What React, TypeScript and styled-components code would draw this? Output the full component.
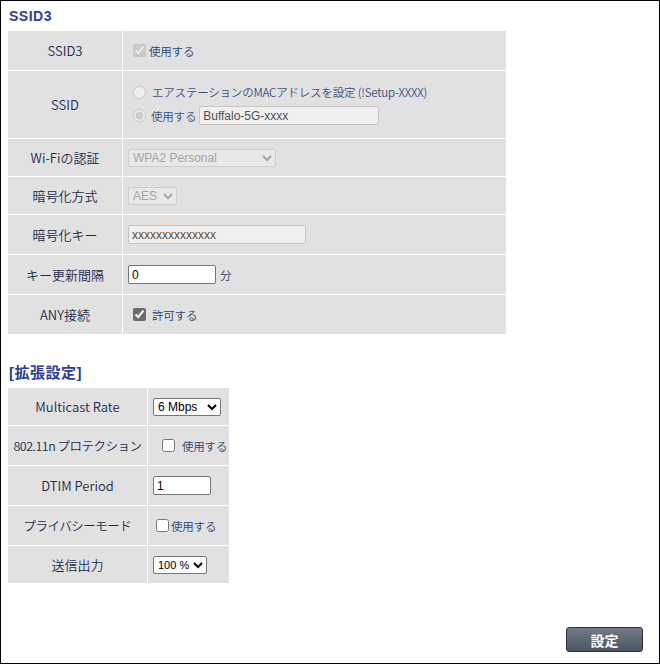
import React from "react";
import styled, { createGlobalStyle } from "styled-components";

const GlobalStyle = createGlobalStyle`
  html, body {
    margin: 0;
    padding: 0;
    background: #fff;
  }
  body {
    font-family: "Noto Sans CJK JP", "Liberation Sans", sans-serif;
    font-size: 13px;
    color: #1d2b4c;
  }
`;

const Frame = styled.div`
  box-sizing: border-box;
  width: 660px;
  height: 664px;
  border: 1px solid #000;
  padding: 6px 7px 0 7px;
  display: flex;
  flex-direction: column;
`;

const SectionTitle = styled.h2<{ $top?: number; $size?: number }>`
  margin: ${(p) => p.$top ?? 0}px 0 0 1px;
  height: 18px;
  line-height: 18px;
  font-family: "Liberation Sans", "Noto Sans CJK JP", sans-serif;
  font-size: ${(p) => p.$size ?? 14}px;
  font-weight: 700;
  color: #2d3d98;
  letter-spacing: 0.5px;
`;

const Grid = styled.div<{ $label: number; $width: number }>`
  display: grid;
  grid-template-columns: ${(p) => p.$label}px minmax(0, 1fr);
  gap: 1px;
  width: ${(p) => p.$width}px;
  margin-top: 6px;
`;

const Label = styled.div<{ $h: number; $tight?: boolean }>`
  height: ${(p) => p.$h}px;
  background: #e1e1e1;
  display: flex;
  align-items: center;
  justify-content: center;
  overflow: hidden;
  font-family: "Noto Sans CJK JP", "Liberation Sans", sans-serif;
  font-size: ${(p) => (p.$tight ? 12.5 : 13)}px;
  font-weight: 350;
  letter-spacing: ${(p) => (p.$tight ? -0.5 : 0)}px;
  color: #1d2b4c;
  white-space: nowrap;
`;

const Value = styled.div<{ $h: number }>`
  height: ${(p) => p.$h}px;
  background: #e1e1e1;
  display: flex;
  flex-direction: column;
  justify-content: center;
  gap: 6px;
  padding-left: 5px;
  font-family: "Noto Sans CJK JP", "Liberation Sans", sans-serif;
  font-size: 11.5px;
  font-weight: 350;
  color: #2c4372;
  overflow: hidden;
`;

const Line = styled.div<{ $gap?: number }>`
  display: flex;
  align-items: center;
  gap: ${(p) => p.$gap ?? 4}px;
  white-space: nowrap;
`;

const Check = styled.input.attrs({ type: "checkbox" })<{ $left?: number }>`
  width: 13px;
  height: 13px;
  margin: 0 0 0 ${(p) => p.$left ?? 5}px;
  accent-color: #6c6c6c;
`;

const Radio = styled.input.attrs({ type: "radio" })`
  width: 13px;
  height: 13px;
  margin: 0 2px 0 5px;
`;

const OptText = styled.span<{ $dim?: boolean }>`
  color: ${(p) => (p.$dim ? "#3b5080" : "#2c4372")};
  letter-spacing: -0.2px;
`;

const TextBox = styled.input<{ $w: number; $disabled?: boolean }>`
  box-sizing: border-box;
  width: ${(p) => p.$w}px;
  height: 19px;
  padding: 0 3px;
  font-family: "Liberation Sans", sans-serif;
  font-size: 12px;
  color: ${(p) => (p.$disabled ? "#505050" : "#000")};
  background: ${(p) => (p.$disabled ? "#efefef" : "#fff")};
  border: 1px solid ${(p) => (p.$disabled ? "#c6c6c6" : "#767676")};
  border-radius: 2px;
  outline: none;
`;

const Select = styled.select<{ $w: number; $small?: boolean }>`
  box-sizing: border-box;
  width: ${(p) => p.$w}px;
  height: 18px;
  padding: 0;
  font-family: "Liberation Sans", sans-serif;
  font-size: ${(p) => (p.$small ? 11 : 12)}px;
  color: #000;
  background: #fff;
  border: 1px solid #767676;
  border-radius: 2px;
  &:disabled {
    color: #8a8a8a;
    background: #ebebeb;
    border-color: #c6c6c6;
  }
`;

const Footer = styled.div`
  margin-top: auto;
  display: flex;
  justify-content: flex-end;
  padding: 0 9px 11px 0;
`;

const SubmitButton = styled.button`
  width: 77px;
  height: 25px;
  border: 1px solid #2e3136;
  border-radius: 3px;
  background: linear-gradient(#737b88, #4d5562);
  color: #fff;
  font-family: "Noto Sans CJK JP", sans-serif;
  font-weight: 700;
  font-size: 14px;
  line-height: 1;
  cursor: pointer;
`;

export default function App() {
  return (
    <>
      <GlobalStyle />
      <Frame>
        <SectionTitle>SSID3</SectionTitle>
        <Grid $label={114} $width={498}>
          <Label $h={39}>SSID3</Label>
          <Value $h={39}>
            <Line $gap={3}>
              <Check checked disabled readOnly />
              <OptText>使用する</OptText>
            </Line>
          </Value>

          <Label $h={67}>SSID</Label>
          <Value $h={67}>
            <Line>
              <Radio name="ssid" disabled />
              <OptText $dim>エアステーションのMACアドレスを設定 (!Setup-XXXX)</OptText>
            </Line>
            <Line $gap={3}>
              <Radio name="ssid" disabled checked readOnly />
              <OptText $dim>使用する</OptText>
              <TextBox $w={180} $disabled disabled defaultValue="Buffalo-5G-xxxx" />
            </Line>
          </Value>

          <Label $h={37}>Wi-Fiの認証</Label>
          <Value $h={37}>
            <Line>
              <Select $w={148} disabled defaultValue="wpa2">
                <option value="wpa2">WPA2 Personal</option>
              </Select>
            </Line>
          </Value>

          <Label $h={37}>暗号化方式</Label>
          <Value $h={37}>
            <Line>
              <Select $w={49} disabled defaultValue="aes">
                <option value="aes">AES</option>
              </Select>
            </Line>
          </Value>

          <Label $h={39}>暗号化キー</Label>
          <Value $h={39}>
            <Line>
              <TextBox $w={178} $disabled disabled defaultValue="xxxxxxxxxxxxxx" />
            </Line>
          </Value>

          <Label $h={39}>キー更新間隔</Label>
          <Value $h={39}>
            <Line>
              <TextBox $w={88} defaultValue="0" />
              <OptText>分</OptText>
            </Line>
          </Value>

          <Label $h={39}>ANY接続</Label>
          <Value $h={39}>
            <Line $gap={6}>
              <Check defaultChecked />
              <OptText>許可する</OptText>
            </Line>
          </Value>
        </Grid>

        <SectionTitle $top={30} $size={15}>[拡張設定]</SectionTitle>
        <Grid $label={139} $width={221}>
          <Label $h={37}>Multicast Rate</Label>
          <Value $h={37}>
            <Line>
              <Select $w={68} defaultValue="6">
                <option value="6">6 Mbps</option>
              </Select>
            </Line>
          </Value>

          <Label $h={39} $tight>802.11n プロテクション</Label>
          <Value $h={39}>
            <Line $gap={7}>
              <Check $left={9} />
              <OptText>使用する</OptText>
            </Line>
          </Value>

          <Label $h={39}>DTIM Period</Label>
          <Value $h={39}>
            <Line>
              <TextBox $w={58} defaultValue="1" />
            </Line>
          </Value>

          <Label $h={39} $tight>プライバシーモード</Label>
          <Value $h={39}>
            <Line $gap={2}>
              <Check $left={3} />
              <OptText>使用する</OptText>
            </Line>
          </Value>

          <Label $h={37}>送信出力</Label>
          <Value $h={37}>
            <Line>
              <Select $w={54} $small defaultValue="100">
                <option value="100">100 %</option>
              </Select>
            </Line>
          </Value>
        </Grid>

        <Footer>
          <SubmitButton>設定</SubmitButton>
        </Footer>
      </Frame>
    </>
  );
}
